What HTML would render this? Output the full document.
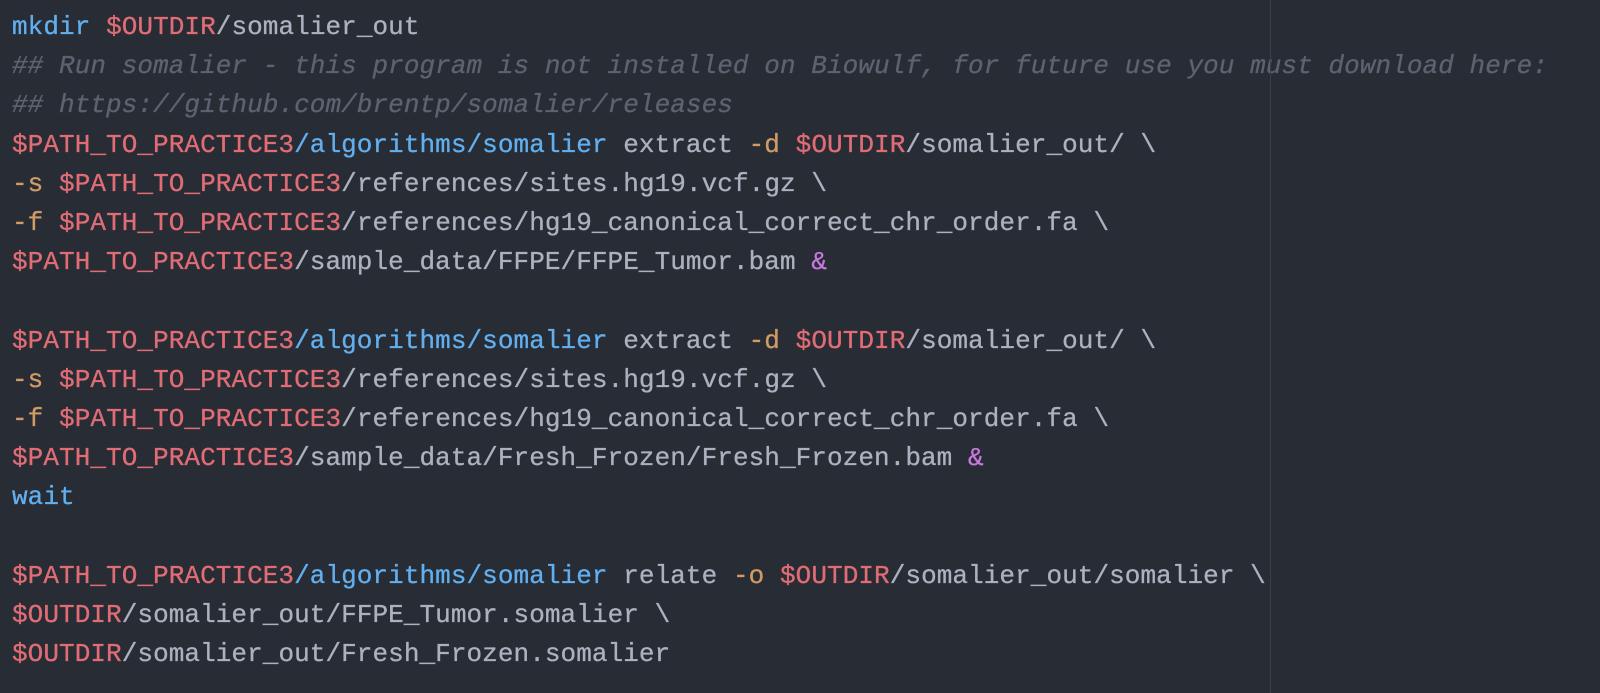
<!DOCTYPE html>
<html><head><meta charset="utf-8"><style>
html,body{margin:0;padding:0;background:#282c34;width:1600px;height:693px;overflow:hidden}
pre{margin:0;padding:8px 0 0 12px;font-family:"Liberation Mono",monospace;font-size:26px;line-height:39.2px;letter-spacing:0.07px;color:#abb2bf;white-space:pre;-webkit-text-stroke:0.3px currentColor}
.b{color:#61afef}.r{color:#e06c75}.c{color:#5c6370;font-style:italic}.o{color:#d19a66}.p{color:#c678dd}
.guide{position:absolute;left:1270px;top:0;width:1px;height:693px;background:#3b4048}
</style></head><body><div class="guide"></div><pre><span class="b">mkdir</span> <span class="r">$OUTDIR</span>/somalier_out
<span class="c">## Run somalier - this program is not installed on Biowulf, for future use you must download here:</span>
<span class="c">## https://github.com/brentp/somalier/releases</span>
<span class="r">$PATH_TO_PRACTICE3</span><span class="b">/algorithms/somalier</span> extract <span class="o">-d</span> <span class="r">$OUTDIR</span>/somalier_out/ \
<span class="o">-s</span> <span class="r">$PATH_TO_PRACTICE3</span>/references/sites.hg19.vcf.gz \
<span class="o">-f</span> <span class="r">$PATH_TO_PRACTICE3</span>/references/hg19_canonical_correct_chr_order.fa \
<span class="r">$PATH_TO_PRACTICE3</span>/sample_data/FFPE/FFPE_Tumor.bam <span class="p">&amp;</span>

<span class="r">$PATH_TO_PRACTICE3</span><span class="b">/algorithms/somalier</span> extract <span class="o">-d</span> <span class="r">$OUTDIR</span>/somalier_out/ \
<span class="o">-s</span> <span class="r">$PATH_TO_PRACTICE3</span>/references/sites.hg19.vcf.gz \
<span class="o">-f</span> <span class="r">$PATH_TO_PRACTICE3</span>/references/hg19_canonical_correct_chr_order.fa \
<span class="r">$PATH_TO_PRACTICE3</span>/sample_data/Fresh_Frozen/Fresh_Frozen.bam <span class="p">&amp;</span>
<span class="b">wait</span>

<span class="r">$PATH_TO_PRACTICE3</span><span class="b">/algorithms/somalier</span> relate <span class="o">-o</span> <span class="r">$OUTDIR</span>/somalier_out/somalier \
<span class="r">$OUTDIR</span>/somalier_out/FFPE_Tumor.somalier \
<span class="r">$OUTDIR</span>/somalier_out/Fresh_Frozen.somalier</pre></body></html>
